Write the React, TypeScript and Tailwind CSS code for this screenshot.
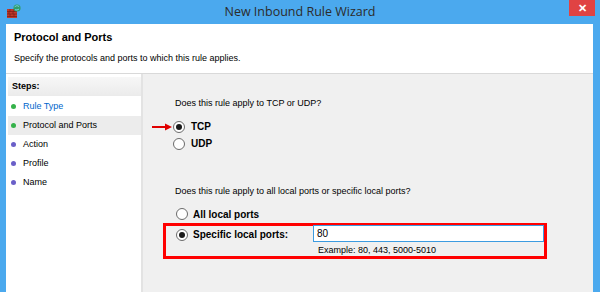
import React from 'react';

const font = { fontFamily: '"Liberation Sans", Arial, sans-serif' };

function Radio({ checked }: { checked?: boolean }) {
    return (
        <span className="flex h-[12px] w-[12px] shrink-0 items-center justify-center rounded-full border border-[#6b6b6b] bg-white">
            {checked && <span className="h-[6px] w-[6px] rounded-full bg-[#1a1a1a]" />}
        </span>
    );
}

function FirewallIcon() {
    return (
        <svg width="16" height="16" viewBox="0 0 16 16">
            <rect x="1" y="6" width="10" height="9" fill="#c0392b" />
            <path d="M1 8.5h10M1 11h10M1 13.5h10M4 6v2.5M8 6v2.5M3 8.5v2.5M7 8.5v2.5M4 11v2.5M8 11v2.5" stroke="#7a1c12" strokeWidth="0.7" />
            <circle cx="11" cy="5" r="3.6" fill="#2e9e6b" />
            <path d="M8.5 4.2c1-1.6 3.2-2 4.6-0.6M9 6.6c1.2 0.6 2.8 0.5 4-0.6" stroke="#7fd4f0" strokeWidth="0.9" fill="none" />
        </svg>
    );
}

const steps = [
    { label: 'Rule Type', done: true, link: true },
    { label: 'Protocol and Ports', done: true, active: true },
    { label: 'Action' },
    { label: 'Profile' },
    { label: 'Name' },
];

export default function App() {
    return (
        <div className="flex h-[292px] w-[600px] flex-col overflow-hidden bg-[#4ba9ee]" style={font}>
            {/* Title bar */}
            <div className="relative flex h-[24px] shrink-0 items-center justify-center">
                <div className="absolute left-[6px] top-[3px]">
                    <FirewallIcon />
                </div>
                <span className="text-[12.5px] text-[#2b2b2b]" style={{ fontFamily: '"Open Sans", "Noto Sans", sans-serif' }}>
                    New Inbound Rule Wizard
                </span>
                <div className="absolute right-[5px] top-0 flex h-[16px] w-[26px] items-center justify-center bg-[#e04343] text-[11px] font-bold leading-none text-white">
                    ✕
                </div>
            </div>

            <div className="ml-[6px] mr-[7px] flex flex-1 flex-col bg-[#f0f0f0]">
                {/* Header */}
                <div className="h-[50px] shrink-0 border-b border-[#d9d9d9] bg-white pl-[8px] pt-[6px]">
                    <div className="text-[11px] font-bold leading-[14px] text-black">Protocol and Ports</div>
                    <div className="mt-[8px] text-[9px] leading-[12px] text-black">Specify the protocols and ports to which this rule applies.</div>
                </div>

                <div className="flex flex-1">
                    {/* Steps */}
                    <div className="w-[137px] shrink-0 border-r-2 border-[#e3e3e3] bg-white pl-[2px] pt-[3px]">
                        <div className="flex h-[19px] items-center bg-gradient-to-b from-[#f7f7f7] to-[#ebebeb] pl-[4px] text-[9px] font-bold text-black">
                            Steps:
                        </div>
                        <div className="mt-[1px] flex flex-col">
                            {steps.map((s) => (
                                <div
                                    key={s.label}
                                    className={`flex h-[19px] items-center gap-[7px] pl-[3px] text-[9px] ${s.active ? 'bg-[#ececec]' : ''} ${s.link ? 'text-[#0066cc]' : 'text-black'}`}
                                >
                                    <span className={`h-[5px] w-[5px] rounded-full ${s.done ? 'bg-[#35b24a]' : 'bg-[#6a5fc8]'}`} />
                                    {s.label}
                                </div>
                            ))}
                        </div>
                    </div>

                    {/* Main pane */}
                    <div className="flex-1 pl-[2px] pt-[23px] text-[9px] text-black">
                        <div className="pl-[30px] leading-[12px]">Does this rule apply to TCP or UDP?</div>
                        <div className="mt-[9px] flex h-[17px] items-center pl-[7px]">
                            <svg width="22" height="8" viewBox="0 0 22 8">
                                <path d="M0 4h15" stroke="#e00000" strokeWidth="2" />
                                <path d="M13 0.5l7 3.5-7 3.5z" fill="#e00000" />
                            </svg>
                            <span className="ml-[-1px]"><Radio checked /></span>
                            <span className="ml-[6px] text-[10px] font-bold">TCP</span>
                        </div>
                        <div className="flex h-[17px] items-center pl-[28px]">
                            <Radio />
                            <span className="ml-[6px] text-[10px] font-bold">UDP</span>
                        </div>

                        <div className="mt-[33px] pl-[30px] leading-[12px]">
                            Does this rule apply to all local ports or specific local ports?
                        </div>
                        <div className="mt-[9px] flex h-[16px] items-center pl-[31px]">
                            <Radio />
                            <span className="ml-[5px] text-[10px] font-bold">All local ports</span>
                        </div>

                        <div className="ml-[18px] mt-[1px] h-[36px] w-[384px] border-[3px] border-[#ff0000]">
                            <div className="flex h-[17px] items-center">
                                <span className="ml-[10px]"><Radio checked /></span>
                                <span className="ml-[5px] w-[120px] text-[10px] font-bold">Specific local ports:</span>
                                <div className="mt-[-3px] flex h-[17px] flex-1 items-center border border-[#3c9be0] bg-white pl-[3px] text-[10px]">
                                    80
                                </div>
                            </div>
                            <div className="pl-[152px] pt-[1px] text-[9px] leading-[12px]">Example: 80, 443, 5000-5010</div>
                        </div>
                    </div>
                </div>
            </div>
        </div>
    );
}
